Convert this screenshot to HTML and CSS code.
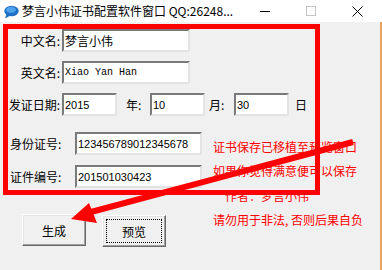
FILE: index.html
```html
<!DOCTYPE html>
<html>
  <head>
    <meta charset="utf-8">
    <title>梦言小伟证书配置软件窗口</title>
    <link rel="stylesheet" href="styles.css">
  </head>
  <body>
    <div class="window">
      <!-- Title bar -->
      <div class="titlebar">
        <svg class="app-icon" width="16" height="14" viewBox="0 0 16 14">
          <ellipse cx="8.5" cy="6" rx="7.2" ry="5.2" fill="#1f6fc6"/>
          <ellipse cx="8" cy="4.8" rx="5" ry="3" fill="#4fa3ea"/>
          <path d="M3.5 9 L2 13.5 L7.5 10.5 Z" fill="#1f6fc6"/>
        </svg>
        <span class="title">梦言小伟证书配置软件窗口 QQ:26248...</span>
        <div class="controls">
          <div class="ctl">
            <svg width="10" height="10"><line x1="0" y1="5.5" x2="10" y2="5.5" stroke="#000" stroke-width="1"/></svg>
          </div>
          <div class="ctl">
            <svg width="10" height="10"><rect x="0.5" y="0.5" width="9" height="9" fill="none" stroke="#c4c4c4"/></svg>
          </div>
          <div class="ctl">
            <svg width="11" height="11"><path d="M0.5 0.5 L10.5 10.5 M10.5 0.5 L0.5 10.5" stroke="#000" stroke-width="1"/></svg>
          </div>
        </div>
      </div>

      <!-- Form -->
      <div class="client">
        <div class="fields">
          <div class="row">
            <span class="lbl">中文名:</span>
            <input class="box wide" type="text" value="梦言小伟">
          </div>
          <div class="row">
            <span class="lbl">英文名:</span>
            <input class="box wide mono" type="text" value="Xiao Yan Han">
          </div>
          <div class="row">
            <span class="lbl">发证日期:</span>
            <input class="box short num" type="text" value="2015">
            <span class="unit year">年:</span>
            <input class="box short num" type="text" value="10">
            <span class="unit month">月:</span>
            <input class="box short num" type="text" value="30">
            <span class="unit day">日</span>
          </div>
        </div>

        <div class="lower">
          <div class="left">
            <div class="row">
              <span class="lbl2">身份证号:</span>
              <input class="box long num" type="text" value="123456789012345678">
            </div>
            <div class="row second">
              <span class="lbl2">证件编号:</span>
              <input class="box long num" type="text" value="201501030423">
            </div>
            <div class="buttons">
              <button class="btn">生成</button>
              <button class="btn focused">预览</button>
            </div>
          </div>
          <div class="notes">
            <div>证书保存已移植至预览窗口</div>
            <div>如果你觉得满意便可以保存</div>
            <div class="indent">作者：梦言小伟</div>
            <div>请勿用于非法<span class="comma">,</span>否则后果自负</div>
          </div>
        </div>
      </div>

      <!-- Red annotation marks drawn over the form -->
      <svg class="marks" width="382" height="270">
        <rect x="5.5" y="26.5" width="312" height="166" fill="none" stroke="#ff0000" stroke-width="5"/>
        <line x1="353" y1="142" x2="91" y2="212" stroke="#ff0000" stroke-width="6"/>
        <polygon points="71,219 89,203 97,223" fill="#ff0000"/>
      </svg>
    </div>
  </body>
</html>
```

FILE: styles.css
```css
body {
  margin: 0px;
  background-color: #f0f0f0;
  font-family: "Noto Sans CJK SC", sans-serif;
  font-size: 12px;
  color: #000;
}

.window {
  position: relative;
  width: 382px;
  height: 270px;
  overflow: hidden;
}

/* title bar */
.titlebar {
  display: flex;
  align-items: center;
  height: 22px;
  background-color: #fff;
}

.app-icon {
  margin-left: 3px;
  margin-top: 1px;
}

.title {
  margin-left: 3px;
  font-size: 12px;
  line-height: 22px;
  white-space: nowrap;
}

.controls {
  display: flex;
  margin-left: auto;
  margin-right: 2px;
}

.ctl {
  display: flex;
  align-items: center;
  justify-content: center;
  width: 46px;
  height: 22px;
}

/* client area */
.client {
  height: 248px;
  box-sizing: border-box;
  border-right: 2px solid #e3a661;
}

.fields {
  display: flex;
  flex-direction: column;
  gap: 9px;
  padding-top: 7px;
}

.row {
  display: flex;
  align-items: center;
  height: 23px;
}

.lbl {
  width: 60px;
  text-align: right;
  white-space: nowrap;
  line-height: 23px;
}

.lbl2 {
  width: 65px;
  margin-left: 10px;
  white-space: nowrap;
  line-height: 23px;
}

.box {
  box-sizing: border-box;
  height: 23px;
  margin: 0px;
  padding: 0px 1px;
  border-width: 2px;
  border-style: solid;
  border-color: #7a7a7a #e3e3e3 #e3e3e3 #7a7a7a;
  background-color: #fff;
  font-family: "Noto Sans CJK SC", sans-serif;
  font-size: 12px;
  color: #000;
  outline: none;
}

.lbl + .box { margin-left: 2px; }

.wide { width: 128px; }
.short { width: 55px; }
.long { width: 127px; }

.mono {
  font-family: "Liberation Mono", monospace;
  font-size: 10px;
}

.num {
  font-family: "Liberation Sans", sans-serif;
  font-size: 11px;
}

.unit {
  white-space: nowrap;
  line-height: 23px;
}

.year { margin-left: 9px; width: 24px; }
.month { margin-left: 4px; width: 25px; }
.day { margin-left: 6px; }

.lower {
  display: flex;
  margin-top: 16px;
}

.left {
  display: flex;
  flex-direction: column;
  width: 205px;
}

.second { margin-top: 10px; }

.buttons {
  display: flex;
  gap: 16px;
  margin-top: 26px;
  padding-left: 22px;
}

.btn {
  width: 64px;
  height: 32px;
  margin: 0px;
  padding: 0px;
  border: 1px solid;
  border-color: #fff #696969 #696969 #fff;
  box-shadow: inset -1px -1px #a0a0a0, inset 1px 1px #e3e3e3;
  background-color: #f0f0f0;
  font-family: "Noto Sans CJK SC", sans-serif;
  font-size: 12px;
  color: #000;
}

.focused {
  margin-top: 1px;
  outline: 1px dotted #000;
  outline-offset: -5px;
}

.notes {
  margin-left: 8px;
  padding-top: 3px;
  color: #ff0000;
  font-size: 12px;
  line-height: 24.3px;
  white-space: nowrap;
}

.indent { padding-left: 12px; }

.comma {
  display: inline-block;
  width: 6px;
}

/* annotation layer */
.marks {
  position: absolute;
  top: 0px;
  left: 0px;
  pointer-events: none;
}
```
